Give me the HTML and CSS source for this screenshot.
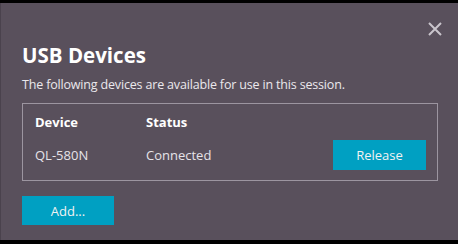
FILE: index.html
```html
<!DOCTYPE html>
<html>
<head>
<meta charset="utf-8">
<link rel="stylesheet" href="styles.css">
</head>
<body>
<div class="dialog">
  <button class="close" aria-label="Close">
    <svg width="14" height="14" viewBox="0 0 14 14"><path d="M1 1L13 13M13 1L1 13" stroke="#c9c5cc" stroke-width="2" fill="none"/></svg>
  </button>
  <h1 class="title">USB Devices</h1>
  <p class="subtitle">The following devices are available for use in this session.</p>
  <div class="table">
    <div class="row head">
      <div class="c-device">Device</div>
      <div class="c-status">Status</div>
    </div>
    <div class="row item">
      <div class="c-device">QL-580N</div>
      <div class="c-status">Connected</div>
      <button class="btn release">Release</button>
    </div>
  </div>
  <button class="btn add">Add...</button>
</div>
</body>
</html>
```
FILE: styles.css
```css
html, body { margin: 0; padding: 0; background: #000; }
body { width: 458px; height: 244px; overflow: hidden; font-family: "Open Sans", "Noto Sans", sans-serif; }
.dialog {
  margin-top: 3px;
  height: 237px;
  box-sizing: border-box;
  background: #59505c;
  border-left: 1px solid #4a424d;
  padding: 20px 20px 0 21px;
  position: relative;
  display: flex;
  flex-direction: column;
}
.close {
  position: absolute; top: 19px; right: 16px;
  background: none; border: 0; padding: 0; width: 14px; height: 14px; display: block;
}
.close svg { display: block; }
.title { margin: 18px 0 0 0; color: #fff; font-size: 20.5px; font-weight: 700; line-height: 28px; }
.subtitle { margin: 7px 0 0 0; color: #ebe8ec; font-size: 12.5px; letter-spacing: -0.17px; line-height: 18px; }
.table {
  margin-top: 9px;
  border: 1px solid #9c95a0;
  height: 78px;
  box-sizing: border-box;
  padding: 0 11px 0 12px;
}
.row { display: flex; align-items: center; }
.row.head { height: 34px; padding-top: 2px; box-sizing: border-box; color: #fff; font-weight: 700; font-size: 13px; }
.row.item { height: 34px; color: #e6e3e8; font-size: 13px; }
.c-device { width: 111px; }
.c-status { flex: 1; }
.btn {
  background: #00a0c2; color: #f2f2f2; border: 0; border-radius: 0;
  font-family: "Open Sans", "Noto Sans", sans-serif; font-size: 13px; padding: 0;
}
.release { width: 93px; height: 30px; }
.add { width: 92px; height: 29px; margin-top: 15px; align-self: flex-start; }
```
